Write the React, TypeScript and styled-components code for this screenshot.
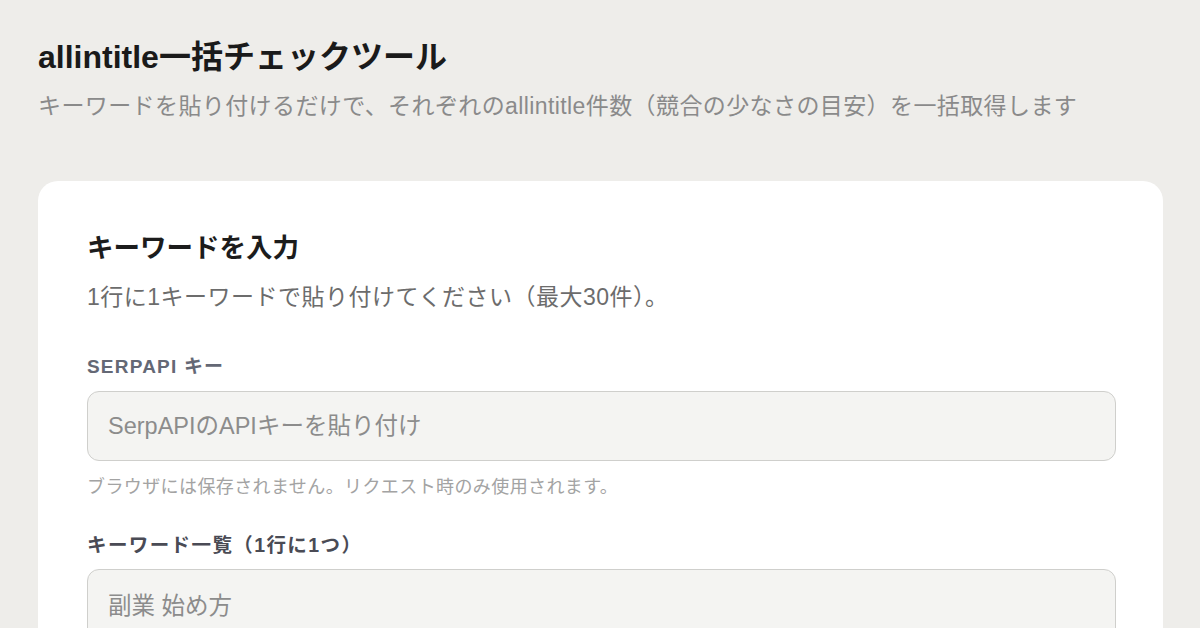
import styled, { createGlobalStyle } from 'styled-components';

const FONT = `"Liberation Sans", "Noto Sans CJK JP", sans-serif`;

const GlobalStyle = createGlobalStyle`
  html, body {
    margin: 0;
    padding: 0;
    background: #eeedea;
    font-family: ${FONT};
  }
  * {
    box-sizing: border-box;
  }
`;

const App = () => {
  return (
    <>
      <GlobalStyle />
      <Page>
        <Header>
          <Title>allintitle一括チェックツール</Title>
          <Subtitle>
            キーワードを貼り付けるだけで、それぞれのallintitle件数（競合の少なさの目安）を一括取得します
          </Subtitle>
        </Header>
        <Card>
          <CardTitle>キーワードを入力</CardTitle>
          <CardLead>1行に1キーワードで貼り付けてください（最大30件）。</CardLead>

          <Field>
            <Label caps>SERPAPI キー</Label>
            <TextInput type="password" placeholder="SerpAPIのAPIキーを貼り付け" />
            <Hint>ブラウザには保存されません。リクエスト時のみ使用されます。</Hint>
          </Field>

          <Field>
            <Label>キーワード一覧（1行に1つ）</Label>
            <TextArea placeholder="副業 始め方" rows={8} />
          </Field>
        </Card>
      </Page>
    </>
  );
};

export default App;

const Page = styled.div`
  height: 628px;
  overflow: hidden;
  padding: 36px 37px 0 38px;
  display: flex;
  flex-direction: column;
  gap: 61px;
`;

const Header = styled.header`
  display: flex;
  flex-direction: column;
  gap: 14px;
`;

const Title = styled.h1`
  margin: 0;
  font-size: 32px;
  line-height: 42px;
  font-weight: 700;
  color: #1a1a1a;
`;

const Subtitle = styled.p`
  margin: 0;
  font-size: 23px;
  line-height: 28px;
  letter-spacing: 0.4px;
  color: #8a8a8a;
  white-space: nowrap;
`;

const Card = styled.section`
  flex: 1;
  background: #ffffff;
  border-radius: 20px 20px 0 0;
  padding: 50px 47px 0 49px;
  display: flex;
  flex-direction: column;
`;

const CardTitle = styled.h2`
  margin: 0;
  font-size: 26.5px;
  line-height: 34px;
  font-weight: 700;
  color: #1c1c1c;
`;

const CardLead = styled.p`
  margin: 17px 0 0;
  font-size: 23px;
  line-height: 30px;
  letter-spacing: 0.5px;
  color: #6c6c6c;
`;

const Field = styled.div`
  display: flex;
  flex-direction: column;
  margin-top: 43px;

  & + & {
    margin-top: 34px;
  }
`;

const Label = styled.label<{ caps?: boolean }>`
  font-size: ${(p) => (p.caps ? '19px' : '19.5px')};
  line-height: 24px;
  font-weight: 700;
  letter-spacing: ${(p) => (p.caps ? '1.2px' : '1.4px')};
  color: ${(p) => (p.caps ? '#646875' : '#4a4b55')};
  margin-bottom: 12px;
`;

const TextInput = styled.input`
  height: 70px;
  width: 100%;
  border: 1.5px solid #cfcfcc;
  border-radius: 12px;
  background: #f4f4f2;
  padding: 0 20px;
  font-family: ${FONT};
  font-size: 23.5px;
  color: #333;
  outline: none;

  &::placeholder {
    color: #8c8c8c;
  }
`;

const TextArea = styled.textarea`
  width: 100%;
  border: 1.5px solid #cfcfcc;
  border-radius: 12px;
  background: #f4f4f2;
  padding: 21px 20px;
  font-family: ${FONT};
  font-size: 23.5px;
  line-height: 30px;
  color: #333;
  resize: vertical;
  outline: none;

  &::placeholder {
    color: #8c8c8c;
  }
`;

const Hint = styled.p`
  margin: 14px 0 0;
  font-size: 18px;
  line-height: 24px;
  letter-spacing: 0.4px;
  color: #a3a3a3;
`;
